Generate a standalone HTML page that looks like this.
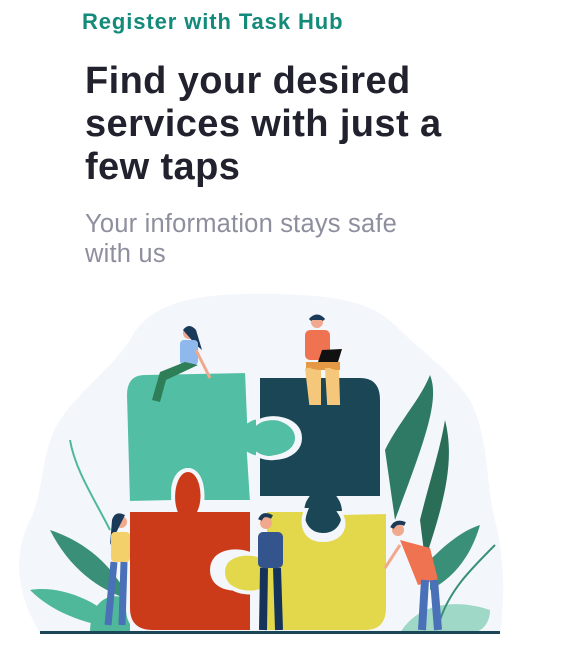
<!DOCTYPE html>
<html><head><meta charset="utf-8"><style>
html,body{margin:0;padding:0;background:#fff;width:565px;height:660px;overflow:hidden;font-family:"Liberation Sans",sans-serif}
.t{position:absolute;left:82px;top:9px;color:#138a7a;font-weight:bold;font-size:22px;letter-spacing:0.9px}
.h{position:absolute;left:85px;top:60px;color:#22222f;font-weight:bold;font-size:38px;line-height:43px;letter-spacing:0.4px}
.s{position:absolute;left:85px;top:209px;color:#8e8e9e;font-size:25.5px;line-height:30px;letter-spacing:0.2px}
svg{position:absolute;left:0;top:0}
</style></head><body>
<svg width="565" height="660" viewBox="0 0 565 660">
<path d="M40 633 C20 600 10 560 30 520 C45 490 40 450 60 420 C80 390 110 370 130 340 C150 300 200 292 280 294 C360 296 380 310 400 330 C420 350 450 370 470 400 C490 440 485 480 495 520 C505 560 505 600 500 633 Z" fill="#f3f7fb"/>
<g>
<path d="M50 530 C80 540 110 560 130 600 C100 590 70 570 50 530Z" fill="#3a8f78"/>
<path d="M30 590 C60 585 100 600 125 630 C90 625 55 615 30 590Z" fill="#4fb89a"/>
<path d="M385 450 C400 420 420 400 430 375 C440 400 425 440 395 520Z" fill="#2f7a64"/>
<path d="M420 520 C430 480 440 450 445 420 C455 460 445 500 425 560Z" fill="#2a6e58"/>
<path d="M430 560 C450 540 465 530 480 525 C470 560 450 580 430 590Z" fill="#3a8f78"/>
<path d="M400 633 C420 600 460 600 490 610 C490 625 480 633 470 633Z" fill="#9fd8c6"/>
<path d="M90 633 C90 600 110 590 130 600 L130 633Z" fill="#4fb89a"/>
<path d="M70 440 C75 470 95 500 110 530" stroke="#4fb89a" stroke-width="2" fill="none"/>
<path d="M440 620 C450 590 470 570 495 545" stroke="#3a8f78" stroke-width="2" fill="none"/>
</g>
<g stroke="#f3f7fb" stroke-width="4">
<path d="M145 373 L247 371 L249 420 C262 412 297 418 297 438 C297 458 262 462 249 455 L252 502 L200 502 C205 490 200 470 188 470 C175 470 170 490 175 502 L128 503 L125 395 Q125 373 145 373Z" fill="#52bfa5"/>
<path d="M258 376 L360 376 Q382 376 382 400 L382 498 L340 498 C348 510 345 535 323 535 C302 535 298 510 306 498 L258 498 L258 455 C270 462 300 458 300 438 C300 418 270 414 258 422 Z" fill="#1b4656"/>
<path d="M128 510 L175 510 C170 495 175 470 188 470 C201 470 206 495 200 510 L252 510 L252 555 C238 548 212 550 212 570 C212 590 238 592 252 585 L252 632 L153 632 Q128 632 128 608 Z" fill="#cb3b19"/>
<path d="M265 510 L306 510 C300 525 305 540 323 540 C342 540 348 525 340 513 L388 512 L388 608 Q388 632 365 632 L265 632 L263 590 C250 596 223 592 223 572 C223 552 252 550 265 558 Z" fill="#e3d84b"/>
</g>
<g>
<circle cx="189" cy="333" r="6" fill="#f0a98d"/><path d="M183 330 Q189 322 196 330 L202 350 L196 345Z" fill="#1b3a5a"/>
<rect x="180" y="340" width="18" height="25" rx="4" fill="#8fb8ec"/>
<path d="M185 362 L160 372 L152 400 L160 402 L166 380 L198 365Z" fill="#2e7e58"/>
<path d="M196 350 L210 378" stroke="#f0a98d" stroke-width="3"/>
<circle cx="317" cy="322" r="6" fill="#f0a98d"/><path d="M310 320 Q317 312 324 320" fill="#1b3a5a" stroke="#1b3a5a" stroke-width="3"/>
<rect x="305" y="330" width="25" height="30" rx="5" fill="#ef7350"/>
<path d="M322 350 L342 349 L338 362 L318 362Z" fill="#111"/>
<rect x="306" y="362" width="34" height="8" fill="#e49a44"/>
<path d="M308 368 L312 402 L318 402 L318 370 M328 368 L330 402 L337 402 L336 370" fill="#f4c77a" stroke="#f4c77a" stroke-width="6"/>
<circle cx="121" cy="522" r="6" fill="#f0a98d"/><path d="M112 520 Q115 510 125 515 L110 545Z" fill="#1b3a5a"/>
<rect x="111" y="532" width="19" height="30" rx="4" fill="#f4d06a"/>
<path d="M114 562 L108 625 M124 562 L122 625" stroke="#4a70b8" stroke-width="7"/>
<circle cx="266" cy="523" r="6" fill="#f0a98d"/><path d="M260 520 Q263 512 272 517" stroke="#1b3a5a" stroke-width="4" fill="none"/>
<rect x="258" y="532" width="25" height="36" rx="5" fill="#33548c"/>
<path d="M264 568 L263 630 M277 568 L279 630" stroke="#163459" stroke-width="8"/>
<circle cx="398" cy="530" r="6" fill="#f0a98d"/><path d="M392 528 Q396 520 405 524" stroke="#1b3a5a" stroke-width="4" fill="none"/>
<path d="M400 540 L430 548 L438 580 L418 585Z" fill="#ef7350"/>
<path d="M425 580 L422 630 M434 580 L438 630" stroke="#4a70b8" stroke-width="8"/>
<path d="M400 545 L385 568" stroke="#f0a98d" stroke-width="3"/>
</g>
<rect x="40" y="631" width="460" height="3" fill="#1b4656"/>
</svg>
<div class="t">Register with Task Hub</div>
<div class="h">Find your desired<br>services with just a<br>few taps</div>
<div class="s">Your information stays safe<br>with us</div>
</body></html>
